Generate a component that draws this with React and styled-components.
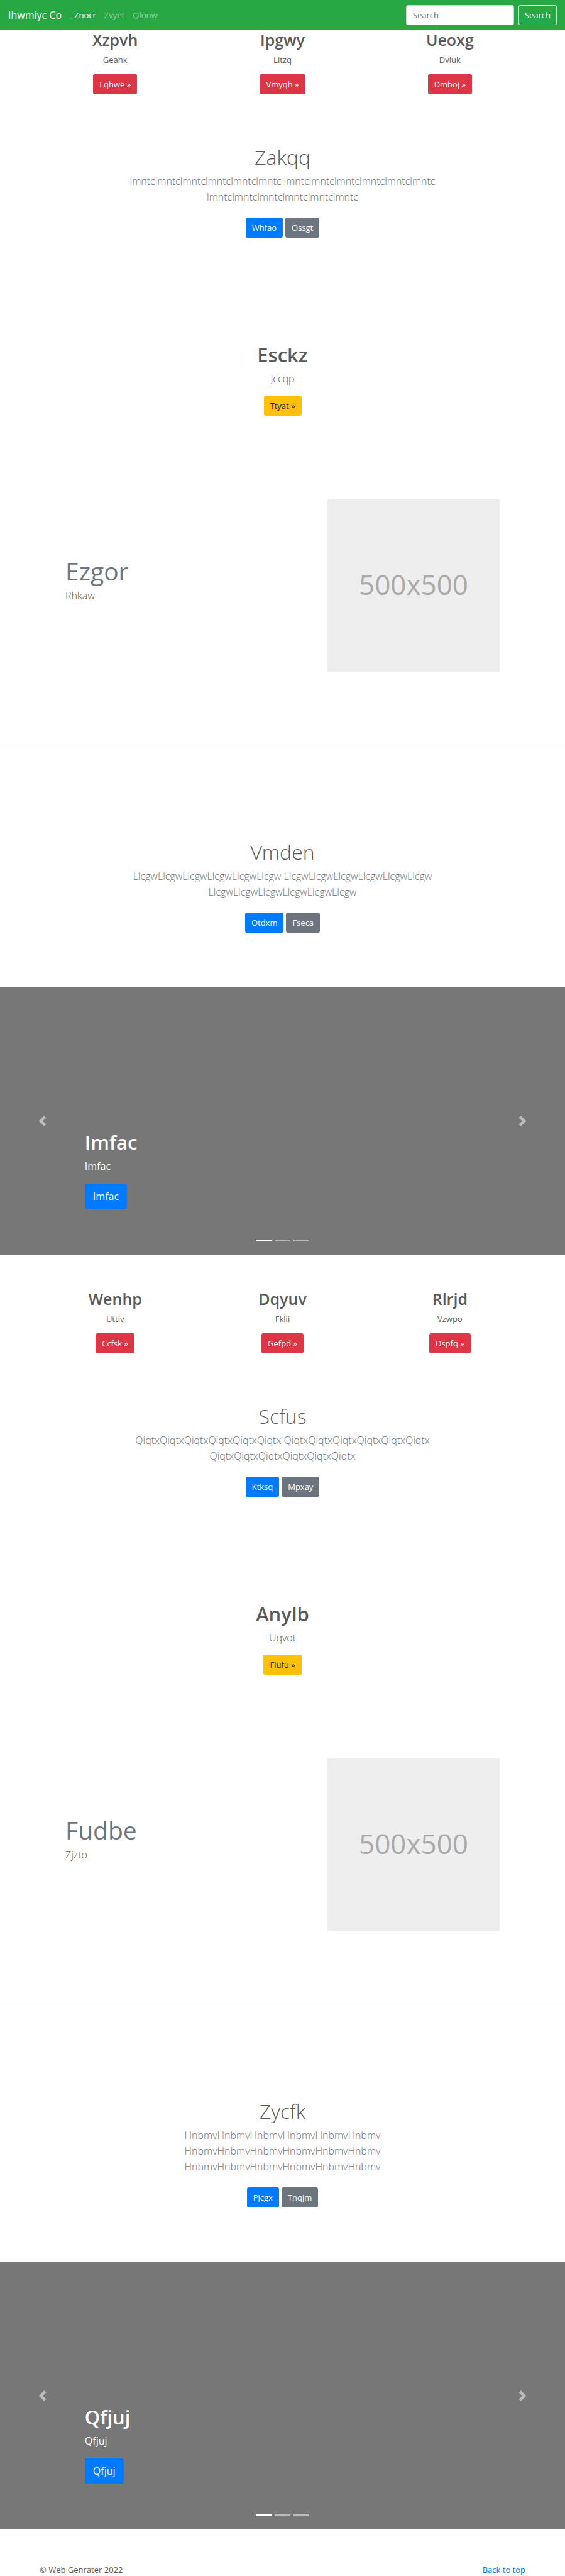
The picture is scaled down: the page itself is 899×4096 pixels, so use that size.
import React from "react";
import styled, { createGlobalStyle } from "styled-components";

const GlobalStyle = createGlobalStyle`
  *, *::before, *::after { box-sizing: border-box; }
  body {
    margin: 0;
    background: #fff;
    color: #5a5a5a;
    font-family: "Open Sans", "Noto Sans", sans-serif;
    font-size: 13px;
    line-height: 20px;
  }
  h1, h2, p, ul { margin: 0; padding: 0; }
  a { text-decoration: none; }
`;

const Navbar = styled.nav`
  display: flex;
  align-items: center;
  justify-content: space-between;
  height: 47px;
  padding: 0 13px;
  background: #28a745;
`;

const NavGroup = styled.div`
  display: flex;
  align-items: center;
`;

const Brand = styled.a`
  margin-right: 20px;
  color: #fff;
  font-size: 16px;
`;

const NavList = styled.ul`
  display: flex;
  gap: 13px;
  list-style: none;
`;

const NavLink = styled.a`
  color: ${({ $active }) => ($active ? "#fff" : "rgba(255, 255, 255, 0.5)")};
`;

const SearchForm = styled.form`
  display: flex;
  gap: 7px;
`;

const SearchInput = styled.input`
  width: 172px;
  height: 32px;
  padding: 0 10px;
  border: 1px solid #ced4da;
  border-radius: 3px;
  background: #fff;
  color: #495057;
  font: inherit;
  &::placeholder { color: #6c757d; opacity: 1; }
`;

const SearchButton = styled.button`
  height: 32px;
  padding: 0 9px;
  border: 1px solid #f8f9fa;
  border-radius: 3px;
  background: transparent;
  color: #f8f9fa;
  font: inherit;
`;

const variants = {
  danger: ["#dc3545", "#fff"],
  warning: ["#ffc107", "#212529"],
  primary: ["#007bff", "#fff"],
  secondary: ["#6c757d", "#fff"],
};

const Button = styled.a`
  display: inline-flex;
  align-items: center;
  height: ${({ $large }) => ($large ? 40 : 32)}px;
  padding: 0 ${({ $large }) => ($large ? 13 : 10)}px;
  border-radius: ${({ $large }) => ($large ? 4 : 3)}px;
  background: ${({ $variant }) => variants[$variant][0]};
  color: ${({ $variant }) => variants[$variant][1]};
  font-size: ${({ $large }) => ($large ? 16 : 13)}px;
`;

const MarketingRow = styled.section`
  display: grid;
  grid-template-columns: repeat(3, 1fr);
  max-width: 799px;
  margin: 0 auto;
  padding-top: ${({ $spaced }) => ($spaced ? 54 : 0)}px;
`;

const MarketingColumn = styled.div`
  display: flex;
  flex-direction: column;
  align-items: center;
`;

const MarketingTitle = styled.h2`
  margin-bottom: 6px;
  font-size: 25px;
  font-weight: 600;
  line-height: 32px;
`;

const MarketingText = styled.p`
  margin-bottom: 13px;
`;

const Hero = styled.section`
  display: flex;
  flex-direction: column;
  align-items: center;
  max-width: 520px;
  margin: 0 auto;
  padding-top: ${({ $top }) => $top}px;
  padding-bottom: ${({ $bottom }) => $bottom || 0}px;
  text-align: center;
`;

const HeroTitle = styled.h1`
  margin-bottom: 6px;
  font-size: ${({ $bold }) => ($bold ? 31 : 32)}px;
  font-weight: ${({ $bold }) => ($bold ? 600 : 300)};
  line-height: 40px;
`;

const Lead = styled.p`
  color: ${({ $muted }) => ($muted ? "#6c757d" : "inherit")};
  font-size: 16px;
  font-weight: 300;
  line-height: 25px;
`;

const Actions = styled.div`
  display: flex;
  gap: 4px;
  margin-top: ${({ $tight }) => ($tight ? 14 : 20)}px;
`;

const FeatureRow = styled.section`
  display: flex;
  justify-content: space-between;
  max-width: 799px;
  margin: 0 auto;
  padding: 133px 54px 119px;
`;

const FeatureCopy = styled.div`
  margin-top: 93px;
`;

const FeatureTitle = styled.h2`
  margin-bottom: 6px;
  color: #6c757d;
  font-size: 39px;
  font-weight: 400;
  line-height: 42px;
`;

const Placeholder = styled.div`
  display: flex;
  align-items: center;
  justify-content: center;
  width: 274px;
  height: 274px;
  padding-bottom: 4px;
  background: #eee;
  color: #aaa;
  font-size: 44px;
`;

const Divider = styled.hr`
  margin: 0;
  border: 0;
  border-top: 1px solid #e5e5e5;
`;

const CarouselFrame = styled.section`
  position: relative;
  display: flex;
  flex-direction: column;
  justify-content: flex-end;
  height: 426px;
  padding: 0 15% 73px;
  background: #777;
  color: #fff;
`;

const Caption = styled.div`
  display: flex;
  flex-direction: column;
  align-items: flex-start;
`;

const CaptionText = styled.p`
  margin-bottom: 15px;
  font-size: 16px;
  line-height: 25px;
`;

const CarouselControl = styled.button`
  position: absolute;
  top: 0;
  bottom: 0;
  ${({ $side }) => $side}: 0;
  display: flex;
  align-items: center;
  justify-content: center;
  width: 15%;
  padding: 0;
  border: 0;
  background: transparent;
  opacity: 0.5;
`;

const Indicators = styled.div`
  position: absolute;
  right: 0;
  bottom: 21px;
  left: 0;
  display: flex;
  justify-content: center;
  gap: 5px;
`;

const Indicator = styled.button`
  width: 25px;
  height: 3px;
  padding: 0;
  border: 0;
  background: #fff;
  opacity: ${({ $active }) => ($active ? 1 : 0.5)};
`;

const Footer = styled.footer`
  display: flex;
  justify-content: space-between;
  padding: 54px 63px 0;
`;

const FooterLink = styled.a`
  color: #007bff;
`;

const Chevron = ({ path }) => (
  <svg width="17" height="17" viewBox="0 0 8 8" fill="#fff" aria-hidden="true">
    <path d={path} />
  </svg>
);

const Marketing = ({ items, spaced }) => (
  <MarketingRow $spaced={spaced}>
    {items.map(([title, text, action]) => (
      <MarketingColumn key={title}>
        <MarketingTitle>{title}</MarketingTitle>
        <MarketingText>{text}</MarketingText>
        <Button href="#" $variant="danger">{action} »</Button>
      </MarketingColumn>
    ))}
  </MarketingRow>
);

const Intro = ({ title, word, actions, top, bottom }) => {
  const group = word.repeat(6);
  return (
    <Hero $top={top} $bottom={bottom}>
      <HeroTitle>{title}</HeroTitle>
      <Lead $muted>{`${group} ${group} ${group}`}</Lead>
      <Actions>
        <Button href="#" $variant="primary">{actions[0]}</Button>
        <Button href="#" $variant="secondary">{actions[1]}</Button>
      </Actions>
    </Hero>
  );
};

const Callout = ({ title, text, action }) => (
  <Hero $top={166}>
    <HeroTitle $bold>{title}</HeroTitle>
    <Lead>{text}</Lead>
    <Actions $tight>
      <Button href="#" $variant="warning">{action} »</Button>
    </Actions>
  </Hero>
);

const Feature = ({ title, text }) => (
  <>
    <FeatureRow>
      <FeatureCopy>
        <FeatureTitle>{title}</FeatureTitle>
        <Lead>{text}</Lead>
      </FeatureCopy>
      <Placeholder>500x500</Placeholder>
    </FeatureRow>
    <Divider />
  </>
);

const Carousel = ({ label }) => (
  <CarouselFrame>
    <Caption>
      <HeroTitle as="h2" $bold>{label}</HeroTitle>
      <CaptionText>{label}</CaptionText>
      <Button href="#" $variant="primary" $large>{label}</Button>
    </Caption>
    <CarouselControl type="button" $side="left" aria-label="Previous">
      <Chevron path="M5.25 0l-4 4 4 4 1.5-1.5L4.25 4l2.5-2.5L5.25 0z" />
    </CarouselControl>
    <CarouselControl type="button" $side="right" aria-label="Next">
      <Chevron path="M2.75 0l-1.5 1.5L3.75 4l-2.5 2.5L2.75 8l4-4-4-4z" />
    </CarouselControl>
    <Indicators>
      <Indicator type="button" $active aria-label="Slide 1" />
      <Indicator type="button" aria-label="Slide 2" />
      <Indicator type="button" aria-label="Slide 3" />
    </Indicators>
  </CarouselFrame>
);

export default function App() {
  return (
    <>
      <GlobalStyle />
      <Navbar>
        <NavGroup>
          <Brand href="#">Ihwmiyc Co</Brand>
          <NavList>
            <li><NavLink href="#" $active>Znocr</NavLink></li>
            <li><NavLink href="#">Zvyet</NavLink></li>
            <li><NavLink href="#">Qlonw</NavLink></li>
          </NavList>
        </NavGroup>
        <SearchForm>
          <SearchInput type="text" placeholder="Search" aria-label="Search" />
          <SearchButton type="button">Search</SearchButton>
        </SearchForm>
      </Navbar>
      <main>
        <Marketing
          items={[
            ["Xzpvh", "Geahk", "Lqhwe"],
            ["Ipgwy", "Litzq", "Vmyqh"],
            ["Ueoxg", "Dviuk", "Dmboj"],
          ]}
        />
        <Intro title="Zakqq" word="lmntc" actions={["Whfao", "Ossgt"]} top={80} />
        <Callout title="Esckz" text="Jccqp" action="Ttyat" />
        <Feature title="Ezgor" text="Rhkaw" />
        <Intro title="Vmden" word="Llcgw" actions={["Otdxm", "Fseca"]} top={147} bottom={86} />
        <Carousel label="Imfac" />
        <Marketing
          spaced
          items={[
            ["Wenhp", "Uttiv", "Ccfsk"],
            ["Dqyuv", "Fklii", "Gefpd"],
            ["Rlrjd", "Vzwpo", "Dspfq"],
          ]}
        />
        <Intro title="Scfus" word="Qiqtx" actions={["Ktksq", "Mpxay"]} top={80} />
        <Callout title="Anylb" text="Uqvot" action="Fiufu" />
        <Feature title="Fudbe" text="Zjzto" />
        <Intro title="Zycfk" word="Hnbmv" actions={["Pjcgx", "Tnqjm"]} top={147} bottom={86} />
        <Carousel label="Qfjuj" />
      </main>
      <Footer>
        <p>© Web Genrater 2022</p>
        <FooterLink href="#">Back to top</FooterLink>
      </Footer>
    </>
  );
}
